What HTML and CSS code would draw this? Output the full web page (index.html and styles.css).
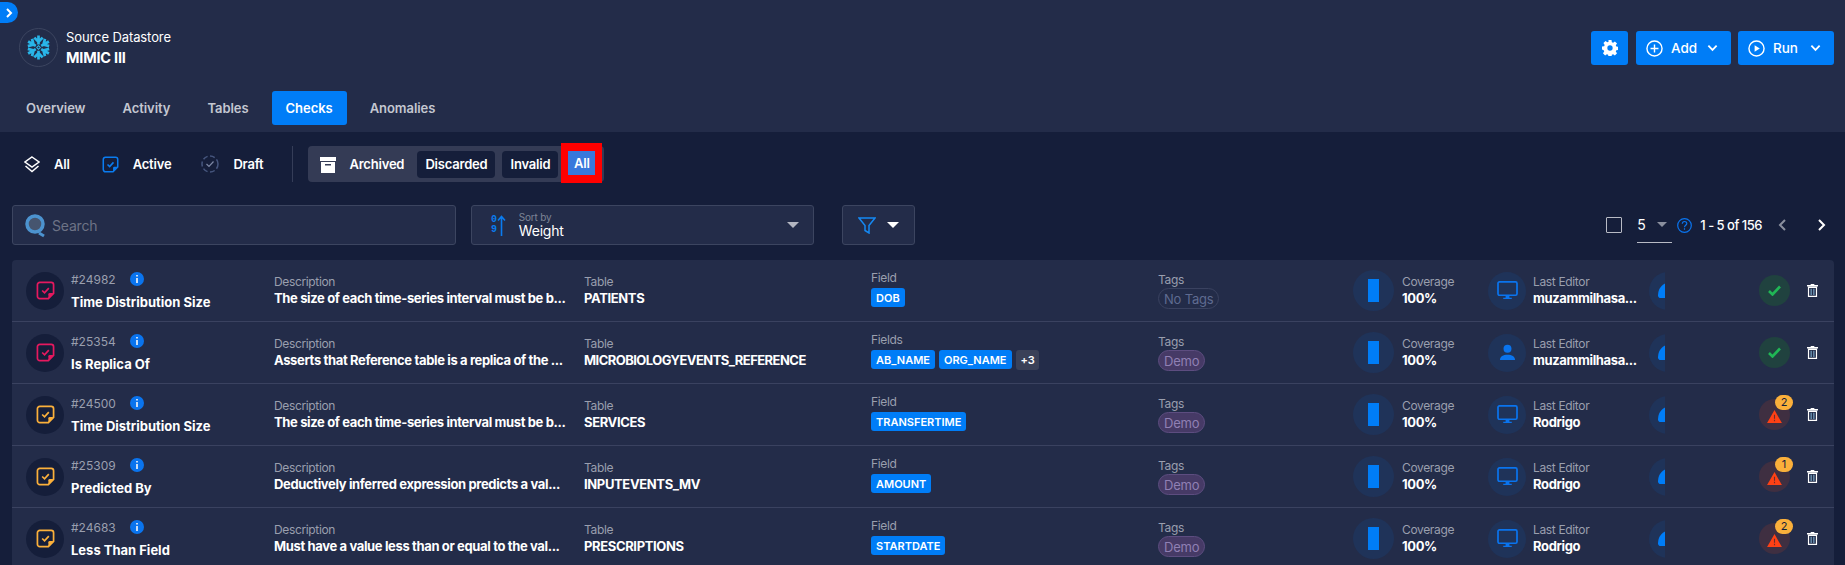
FILE: index.html
```html
<!DOCTYPE html>
<html lang="en">
<head>
    <meta charset="UTF-8">
    <meta name="viewport" content="width=device-width, initial-scale=1.0">
    <title>MIMIC III Checks</title>
    <link rel="stylesheet" href="styles.css">
</head>
<body>
    <svg class="defs" width="0" height="0">
        <symbol id="note" viewBox="0 0 20 20">
            <path d="M4 1.500h12a2.500 2.500 0 0 1 2.500 2.500v9l-5.500 5.500H4A2.500 2.500 0 0 1 1.500 16V4A2.500 2.500 0 0 1 4 1.500z" fill="none" stroke="currentColor" stroke-width="1.800"/>
            <path d="M18.500 12.500h-4a1.500 1.500 0 0 0-1.500 1.500v4.500z" fill="currentColor"/>
            <path d="M6.500 10l2.500 2.500 4.500-5" fill="none" stroke="currentColor" stroke-width="1.800"/>
        </symbol>
        <symbol id="monitor" viewBox="0 0 22 20">
            <path d="M2.500 1h17A1.500 1.500 0 0 1 21 2.500v11a1.500 1.500 0 0 1-1.500 1.500h-17A1.500 1.500 0 0 1 1 13.500v-11A1.500 1.500 0 0 1 2.500 1z" fill="none" stroke="currentColor" stroke-width="1.800"/>
            <path d="M9 15h4v2.500h2.500V19h-9v-1.500H9z" fill="currentColor"/>
        </symbol>
        <symbol id="person" viewBox="0 0 18 18">
            <circle cx="9" cy="5" r="4.200" fill="currentColor"/>
            <path d="M1 17c0-3.500 3.500-5.500 8-5.500s8 2 8 5.500z" fill="currentColor"/>
        </symbol>
        <symbol id="trash" viewBox="0 0 12 14">
            <path d="M4 0h4v1h4v1.500H0V1h4zM1 3h10v11H1zm1.300 1.300v8.400h7.400V4.300z" fill="#fff"/>
            <path d="M4 5h1v7H4zM7 5h1v7H7z" fill="#8fc6e8"/>
        </symbol>
        <symbol id="warn" viewBox="0 0 16 14">
            <path d="M8 0l8 14H0z" fill="#ff4115"/>
            <path d="M7.400 5h1.200v4.500H7.400zM7.400 10.500h1.200V12H7.400z" fill="#6d2c2c"/>
        </symbol>
        <symbol id="info" viewBox="0 0 14 14">
            <circle cx="7" cy="7" r="7" fill="#0a74ee"/>
            <path d="M6.100 3h1.800v1.600H6.100zM6.100 6h1.800v5H6.100z" fill="#dfe9f7"/>
        </symbol>
        <symbol id="chevron" viewBox="0 0 12 8">
            <path d="M1.500 1.500L6 6l4.500-4.500" fill="none" stroke="currentColor" stroke-width="2"/>
        </symbol>
        <g id="flake-arm">
            <path d="M12 9V.5M8 2.500L12 6.500 16 2.500"/>
        </g>
    </svg>

    <a class="side-toggle" href="#">
        <svg width="8" height="10" viewBox="0 0 8 10"><path d="M2 1l4 4-4 4" fill="none" stroke="#fff" stroke-width="2"/></svg>
    </a>

    <header class="header">
        <div class="top-bar">
            <div class="datastore">
                <div class="logo">
                    <svg width="25" height="25" viewBox="0 0 24 24" fill="none" stroke="#29b5e8" stroke-width="2.600">
                        <use href="#flake-arm"/>
                        <use href="#flake-arm" transform="rotate(60 12 12)"/>
                        <use href="#flake-arm" transform="rotate(120 12 12)"/>
                        <use href="#flake-arm" transform="rotate(180 12 12)"/>
                        <use href="#flake-arm" transform="rotate(240 12 12)"/>
                        <use href="#flake-arm" transform="rotate(300 12 12)"/>
                        <path d="M12 10.300L13.700 12 12 13.700 10.300 12z" stroke-width="1"/>
                    </svg>
                </div>
                <div>
                    <div class="datastore-type">Source Datastore</div>
                    <div class="datastore-name">MIMIC III</div>
                </div>
            </div>
            <div class="actions">
                <button class="action-btn gear-btn">
                    <svg width="16" height="16" viewBox="0 0 18 18"><path fill="#fff" fill-rule="evenodd" d="M7.300 0h3.400l.4 2.400 1.400.6 2-1.400 2.400 2.400-1.400 2 .6 1.400 2.400.4v3.400l-2.400.4-.6 1.400 1.400 2-2.400 2.400-2-1.400-1.400.6-.4 2.400H7.300l-.4-2.400-1.400-.6-2 1.400-2.400-2.400 1.400-2-.6-1.400L0 10.700V7.300l2.400-.4.600-1.400-1.400-2L4 1.100l2 1.400 1.400-.6zM9 6a3 3 0 1 0 0 6 3 3 0 0 0 0-6z"/></svg>
                </button>
                <button class="action-btn add-btn">
                    <svg width="17" height="17" viewBox="0 0 18 18" fill="none" stroke="#fff" stroke-width="1.500"><circle cx="9" cy="9" r="8"/><path d="M9 4.800v8.400M4.800 9h8.400"/></svg>
                    <span class="action-label">Add</span>
                    <svg class="action-caret" width="11" height="8"><use href="#chevron"/></svg>
                </button>
                <button class="action-btn run-btn">
                    <svg width="17" height="17" viewBox="0 0 18 18" fill="none" stroke="#fff" stroke-width="1.500"><circle cx="9" cy="9" r="8"/><path d="M7 5.500L12.500 9 7 12.500z" fill="#fff" stroke="none"/></svg>
                    <span class="action-label">Run</span>
                    <svg class="action-caret" width="11" height="8"><use href="#chevron"/></svg>
                </button>
            </div>
        </div>
        <nav class="tabs">
            <a class="tab" href="#">Overview</a>
            <a class="tab" href="#">Activity</a>
            <a class="tab" href="#">Tables</a>
            <a class="tab active" href="#">Checks</a>
            <a class="tab" href="#">Anomalies</a>
        </nav>
    </header>

    <main class="content">
        <div class="status-filter">
            <a class="status-item status-all" href="#">
                <svg width="16" height="17" viewBox="0 0 16 17" fill="none" stroke="#fff" stroke-width="1.500"><path d="M8 1l7 5-7 5-7-5z"/><path d="M1.500 10L8 15.500 14.500 10"/></svg>
                All
            </a>
            <a class="status-item status-active" href="#">
                <svg class="blue-icon" width="17" height="19"><use href="#note"/></svg>
                Active
            </a>
            <a class="status-item status-draft" href="#">
                <svg width="18" height="18" viewBox="0 0 18 18" fill="none"><circle cx="9" cy="9" r="8" stroke="#46567e" stroke-width="1.500" stroke-dasharray="5 2.500"/><path d="M5.500 9l2.500 2.500 4.500-5" stroke="#7d88a5" stroke-width="1.200"/></svg>
                Draft
            </a>
            <span class="filter-divider"></span>
            <div class="archive-group">
                <svg class="archive-icon" width="16" height="17" viewBox="0 0 16 17"><path d="M0 1h16v4H0z" fill="#fff"/><path fill="#fff" fill-rule="evenodd" d="M1 6h14v11H1zm4 2v1.500h6V8z"/></svg>
                <span class="archive-item archive-first">Archived</span>
                <span class="archive-item archive-dark discarded">Discarded</span>
                <span class="archive-item archive-dark invalid">Invalid</span>
                <span class="archive-all"><span>All</span></span>
            </div>
        </div>

        <div class="toolbar">
            <div class="search">
                <svg width="23" height="25" viewBox="0 0 23 25" fill="none"><circle cx="11" cy="11" r="8" fill="#46556f" stroke="#4c93cf" stroke-width="3.500"/><path d="M15 20l5 3" stroke="#4c93cf" stroke-width="3"/></svg>
                <span>Search</span>
            </div>
            <div class="sort">
                <span class="sort-digits">0<br>9</span>
                <svg width="9" height="21" viewBox="0 0 9 21" fill="none" stroke="#0a7cf0" stroke-width="1.600"><path d="M4.500 21V2M1 5.500L4.500 1.500 8 5.500"/></svg>
                <div class="sort-text">
                    <div class="sort-label">Sort by</div>
                    <div class="sort-value">Weight</div>
                </div>
                <span class="caret"></span>
            </div>
            <div class="filter-btn">
                <svg width="18" height="17" viewBox="0 0 18 17" fill="none" stroke="#1588f2" stroke-width="1.500"><path d="M1 1h16l-6 7.500V16l-4-2.500v-5z"/></svg>
                <span class="caret caret-white"></span>
            </div>
            <div class="pager">
                <span class="checkbox"></span>
                <div class="page-size"><span>5</span><span class="caret caret-grey"></span></div>
                <svg class="pager-help" width="15" height="15" viewBox="0 0 15 15" fill="none" stroke="#0a74ee" stroke-width="1.200"><circle cx="7.500" cy="7.500" r="6.800"/><path d="M5.300 5.800c0-3 4.500-3 4.500-.2 0 1.800-2.300 1.700-2.300 3.700M7.500 10.300v1.400"/></svg>
                <span class="page-range">1 - 5 of 156</span>
                <svg class="page-prev" width="9" height="12" viewBox="0 0 9 12"><path d="M7 1L2 6l5 5" fill="none" stroke="#8a8f9e" stroke-width="2"/></svg>
                <svg class="page-next" width="9" height="12" viewBox="0 0 9 12"><path d="M2 1l5 5-5 5" fill="none" stroke="#fff" stroke-width="2"/></svg>
            </div>
        </div>

        <div class="check-list">
            <div class="check-row">
                <div class="check-main">
                    <span class="type-icon pink"><svg width="19" height="19"><use href="#note"/></svg></span>
                    <div>
                        <div class="check-id">#24982 <svg class="info-icon" width="14" height="14"><use href="#info"/></svg></div>
                        <div class="check-name">Time Distribution Size</div>
                    </div>
                </div>
                <div class="cell"><div class="cell-label">Description</div><div class="cell-value">The size of each time-series interval must be b...</div></div>
                <div class="cell"><div class="cell-label">Table</div><div class="cell-value">PATIENTS</div></div>
                <div class="cell"><div class="cell-label">Field</div><div class="chips"><span class="chip">DOB</span></div></div>
                <div class="cell"><div class="cell-label">Tags</div><span class="tag no-tags">No Tags</span></div>
                <div class="metric">
                    <span class="metric-circle"><span class="coverage-bar"></span></span>
                    <div><div class="cell-label">Coverage</div><div class="cell-value">100%</div></div>
                </div>
                <div class="metric">
                    <span class="editor-circle"><svg width="21" height="19"><use href="#monitor"/></svg></span>
                    <div><div class="cell-label">Last Editor</div><div class="cell-value">muzammilhasa...</div></div>
                </div>
                <div class="clip-cell"><span class="clip-circle"></span></div>
                <span class="state state-ok"><svg width="13" height="11" viewBox="0 0 13 11"><path d="M1 6l3.500 3.500L12 1.500" fill="none" stroke="#20b755" stroke-width="2.600"/></svg></span>
                <svg class="trash-icon" width="11" height="13"><use href="#trash"/></svg>
            </div>

            <div class="check-row">
                <div class="check-main">
                    <span class="type-icon pink"><svg width="19" height="19"><use href="#note"/></svg></span>
                    <div>
                        <div class="check-id">#25354 <svg class="info-icon" width="14" height="14"><use href="#info"/></svg></div>
                        <div class="check-name">Is Replica Of</div>
                    </div>
                </div>
                <div class="cell"><div class="cell-label">Description</div><div class="cell-value">Asserts that Reference table is a replica of the ...</div></div>
                <div class="cell"><div class="cell-label">Table</div><div class="cell-value long-name">MICROBIOLOGYEVENTS_REFERENCE</div></div>
                <div class="cell"><div class="cell-label">Fields</div><div class="chips"><span class="chip">AB_NAME</span><span class="chip">ORG_NAME</span><span class="chip-more">+3</span></div></div>
                <div class="cell"><div class="cell-label">Tags</div><span class="tag">Demo</span></div>
                <div class="metric">
                    <span class="metric-circle"><span class="coverage-bar"></span></span>
                    <div><div class="cell-label">Coverage</div><div class="cell-value">100%</div></div>
                </div>
                <div class="metric">
                    <span class="editor-circle"><svg width="17" height="17"><use href="#person"/></svg></span>
                    <div><div class="cell-label">Last Editor</div><div class="cell-value">muzammilhasa...</div></div>
                </div>
                <div class="clip-cell"><span class="clip-circle"></span></div>
                <span class="state state-ok"><svg width="13" height="11" viewBox="0 0 13 11"><path d="M1 6l3.500 3.500L12 1.500" fill="none" stroke="#20b755" stroke-width="2.600"/></svg></span>
                <svg class="trash-icon" width="11" height="13"><use href="#trash"/></svg>
            </div>

            <div class="check-row">
                <div class="check-main">
                    <span class="type-icon amber"><svg width="19" height="19"><use href="#note"/></svg></span>
                    <div>
                        <div class="check-id">#24500 <svg class="info-icon" width="14" height="14"><use href="#info"/></svg></div>
                        <div class="check-name">Time Distribution Size</div>
                    </div>
                </div>
                <div class="cell"><div class="cell-label">Description</div><div class="cell-value">The size of each time-series interval must be b...</div></div>
                <div class="cell"><div class="cell-label">Table</div><div class="cell-value">SERVICES</div></div>
                <div class="cell"><div class="cell-label">Field</div><div class="chips"><span class="chip">TRANSFERTIME</span></div></div>
                <div class="cell"><div class="cell-label">Tags</div><span class="tag">Demo</span></div>
                <div class="metric">
                    <span class="metric-circle"><span class="coverage-bar"></span></span>
                    <div><div class="cell-label">Coverage</div><div class="cell-value">100%</div></div>
                </div>
                <div class="metric">
                    <span class="editor-circle"><svg width="21" height="19"><use href="#monitor"/></svg></span>
                    <div><div class="cell-label">Last Editor</div><div class="cell-value">Rodrigo</div></div>
                </div>
                <div class="clip-cell"><span class="clip-circle"></span></div>
                <span class="state state-warn"><svg width="15" height="13"><use href="#warn"/></svg><span class="count">2</span></span>
                <svg class="trash-icon" width="11" height="13"><use href="#trash"/></svg>
            </div>

            <div class="check-row">
                <div class="check-main">
                    <span class="type-icon amber"><svg width="19" height="19"><use href="#note"/></svg></span>
                    <div>
                        <div class="check-id">#25309 <svg class="info-icon" width="14" height="14"><use href="#info"/></svg></div>
                        <div class="check-name">Predicted By</div>
                    </div>
                </div>
                <div class="cell"><div class="cell-label">Description</div><div class="cell-value">Deductively inferred expression predicts a val...</div></div>
                <div class="cell"><div class="cell-label">Table</div><div class="cell-value">INPUTEVENTS_MV</div></div>
                <div class="cell"><div class="cell-label">Field</div><div class="chips"><span class="chip">AMOUNT</span></div></div>
                <div class="cell"><div class="cell-label">Tags</div><span class="tag">Demo</span></div>
                <div class="metric">
                    <span class="metric-circle"><span class="coverage-bar"></span></span>
                    <div><div class="cell-label">Coverage</div><div class="cell-value">100%</div></div>
                </div>
                <div class="metric">
                    <span class="editor-circle"><svg width="21" height="19"><use href="#monitor"/></svg></span>
                    <div><div class="cell-label">Last Editor</div><div class="cell-value">Rodrigo</div></div>
                </div>
                <div class="clip-cell"><span class="clip-circle"></span></div>
                <span class="state state-warn"><svg width="15" height="13"><use href="#warn"/></svg><span class="count">1</span></span>
                <svg class="trash-icon" width="11" height="13"><use href="#trash"/></svg>
            </div>

            <div class="check-row">
                <div class="check-main">
                    <span class="type-icon amber"><svg width="19" height="19"><use href="#note"/></svg></span>
                    <div>
                        <div class="check-id">#24683 <svg class="info-icon" width="14" height="14"><use href="#info"/></svg></div>
                        <div class="check-name">Less Than Field</div>
                    </div>
                </div>
                <div class="cell"><div class="cell-label">Description</div><div class="cell-value">Must have a value less than or equal to the val...</div></div>
                <div class="cell"><div class="cell-label">Table</div><div class="cell-value">PRESCRIPTIONS</div></div>
                <div class="cell"><div class="cell-label">Field</div><div class="chips"><span class="chip">STARTDATE</span></div></div>
                <div class="cell"><div class="cell-label">Tags</div><span class="tag">Demo</span></div>
                <div class="metric">
                    <span class="metric-circle"><span class="coverage-bar"></span></span>
                    <div><div class="cell-label">Coverage</div><div class="cell-value">100%</div></div>
                </div>
                <div class="metric">
                    <span class="editor-circle"><svg width="21" height="19"><use href="#monitor"/></svg></span>
                    <div><div class="cell-label">Last Editor</div><div class="cell-value">Rodrigo</div></div>
                </div>
                <div class="clip-cell"><span class="clip-circle"></span></div>
                <span class="state state-warn"><svg width="15" height="13"><use href="#warn"/></svg><span class="count">2</span></span>
                <svg class="trash-icon" width="11" height="13"><use href="#trash"/></svg>
            </div>
        </div>
    </main>
</body>
</html>
```

FILE: styles.css
```css
/* --- Page --- */
html, body {
    height: 100%;
}
body {
    font-family: Inter, "Noto Sans", sans-serif;
    margin: 0;
    background-color: #151e3a;
    color: #fff;
    overflow: hidden;
    letter-spacing: -0.2px;
}
a {
    color: inherit;
    text-decoration: none;
}
.defs {
    position: absolute;
}
.side-toggle {
    position: absolute;
    top: 2px;
    left: 0;
    width: 18px;
    height: 21px;
    background-color: #007df7;
    border-radius: 0 11px 11px 0;
    display: flex;
    align-items: center;
    justify-content: center;
}

/* --- Header --- */
.header {
    height: 132px;
    box-sizing: border-box;
    background-color: #232c49;
    padding-top: 28px;
}
.top-bar {
    display: flex;
    justify-content: space-between;
    padding: 3px 11px 0 19px;
    height: 36px;
}
.datastore {
    display: flex;
    align-items: center;
    gap: 8px;
    height: 39px;
    margin-top: -3px;
}
.logo {
    width: 39px;
    height: 39px;
    box-sizing: border-box;
    border: 1px solid #3c4560;
    border-radius: 50%;
    display: flex;
    align-items: center;
    justify-content: center;
}
.datastore-type {
    font-size: 13px;
    font-weight: 400;
    line-height: 18px;
    letter-spacing: -0.1px;
}
.datastore-name {
    font-size: 14.500px;
    font-weight: 700;
    line-height: 20px;
    margin-top: 2px;
}
.actions {
    display: flex;
    gap: 7px;
}
.action-btn {
    height: 34px;
    padding: 0 13px 0 10px;
    display: flex;
    align-items: center;
    background-color: #007df7;
    border: none;
    border-radius: 3px;
    color: #fff;
    font-family: inherit;
    font-size: 13.500px;
    font-weight: 500;
}
.gear-btn {
    width: 37px;
    justify-content: center;
    padding: 0;
    margin-right: 1px;
}
.add-btn {
    width: 95px;
}
.run-btn {
    width: 96px;
}
.action-label {
    margin-left: 8px;
}
.action-caret {
    margin-left: auto;
    color: #fff;
}
.tabs {
    display: flex;
    gap: 9px;
    padding-left: 12px;
    margin-top: 24px;
}
.tab {
    height: 34px;
    padding: 0 14px;
    display: flex;
    align-items: center;
    font-size: 13px;
    font-weight: 600;
    letter-spacing: -0.05px;
    color: #c4c7d1;
    border-radius: 3px;
}
.tab.active {
    background-color: #007df7;
    color: #fff;
}

/* --- Status filter --- */
.content {
    padding: 0 11px 0 12px;
}
.status-filter {
    display: flex;
    align-items: center;
    height: 38px;
    margin-top: 13px;
    font-size: 13px;
    font-weight: 600;
}
.status-item {
    display: flex;
    align-items: center;
    gap: 14px;
}
.status-all {
    margin-left: 12px;
}
.status-active {
    margin-left: 32px;
}
.status-draft {
    margin-left: 30px;
}
.blue-icon {
    color: #0a7cf0;
}
.filter-divider {
    width: 1px;
    height: 36px;
    background-color: #353d58;
    margin-left: 29px;
}
.archive-group {
    display: flex;
    align-items: center;
    height: 36px;
    margin-left: 15px;
    padding-left: 12px;
    width: 296px;
    box-sizing: border-box;
    background-color: #343b55;
    border-radius: 4px;
    position: relative;
}
.archive-first {
    margin-left: 13px;
    width: 68px;
}
.archive-dark {
    background-color: #151e3a;
    height: 27px;
    display: flex;
    align-items: center;
    justify-content: center;
    border-radius: 4px;
}
.discarded {
    width: 78px;
}
.invalid {
    width: 56px;
    margin-left: 7px;
}
.archive-all {
    position: absolute;
    right: 2px;
    top: -3px;
    width: 41px;
    height: 40px;
    box-sizing: border-box;
    border: 7px solid #f00;
    border-width: 8px 7px;
    display: flex;
    align-items: center;
    justify-content: center;
    background-color: #3878dc;
}

/* --- Toolbar --- */
.toolbar {
    display: flex;
    align-items: center;
    height: 40px;
    margin-top: 22px;
}
.search, .sort, .filter-btn {
    height: 40px;
    box-sizing: border-box;
    background-color: #232c49;
    border: 1px solid #3c4560;
    border-radius: 3px;
    display: flex;
    align-items: center;
}
.search {
    width: 444px;
    padding-left: 11px;
    gap: 5px;
    font-size: 14px;
    color: #6d7386;
}
.sort {
    width: 343px;
    margin-left: 15px;
    padding: 0 14px 0 19px;
}
.sort-digits {
    font-family: "Liberation Mono", monospace;
    font-size: 10px;
    font-weight: 700;
    line-height: 10px;
    color: #0a7cf0;
}
.sort-text {
    margin-left: 13px;
    flex: 1;
}
.sort-label {
    font-size: 10px;
    line-height: 11px;
    color: #7d8496;
}
.sort-value {
    font-size: 14px;
    line-height: 16px;
}
.caret {
    width: 0;
    height: 0;
    border-left: 6px solid transparent;
    border-right: 6px solid transparent;
    border-top: 6px solid #b3b6c1;
}
.caret-white {
    border-top-color: #fff;
}
.caret-grey {
    border-left-width: 5px;
    border-right-width: 5px;
    border-top: 5px solid #8a8f9e;
    margin-left: 11px;
}
.filter-btn {
    width: 73px;
    margin-left: 28px;
    padding-left: 15px;
    gap: 11px;
}
.pager {
    margin-left: auto;
    display: flex;
    align-items: center;
    font-size: 13px;
}
.checkbox {
    width: 14px;
    height: 14px;
    border: 1px solid #b8bbc5;
    border-radius: 1px;
}
.page-size {
    width: 35px;
    height: 34px;
    margin-left: 15px;
    display: flex;
    align-items: center;
    border-bottom: 1px solid #b8bbc5;
    font-size: 14px;
}
.pager-help {
    margin-left: 5px;
}
.page-range {
    margin-left: 8px;
    font-weight: 500;
    letter-spacing: -0.5px;
}
.page-prev {
    margin-left: 16px;
}
.page-next {
    margin-left: 30px;
    margin-right: 8px;
}

/* --- Check rows --- */
.check-list {
    margin-top: 15px;
    background-color: #232c49;
    border-radius: 4px 4px 0 0;
}
.check-row {
    display: grid;
    grid-template-columns: 248px 310px 287px 287px 195px 135px 161px 110px 48px 1fr;
    align-items: center;
    height: 62px;
    box-sizing: border-box;
    padding-left: 14px;
    border-bottom: 1px solid #3a4260;
}
.check-main {
    display: flex;
    align-items: center;
    gap: 7px;
}
.type-icon {
    width: 38px;
    height: 38px;
    border-radius: 50%;
    background-color: #151e3a;
    display: flex;
    align-items: center;
    justify-content: center;
}
.type-icon.pink {
    color: #e6195f;
}
.type-icon.amber {
    color: #fbb03b;
}
.check-id {
    display: flex;
    align-items: center;
    gap: 14px;
    font-size: 12px;
    line-height: 17px;
    color: #9a9fae;
    letter-spacing: 0;
}
.check-name {
    font-size: 13px;
    font-weight: 700;
    line-height: 17px;
    margin-top: 6px;
    letter-spacing: 0;
}
.cell-label {
    font-size: 12px;
    line-height: 16px;
    color: #9a9fae;
    letter-spacing: -0.35px;
}
.cell-value {
    font-size: 13px;
    font-weight: 700;
    line-height: 17px;
    white-space: nowrap;
    letter-spacing: -0.36px;
}
.long-name {
    letter-spacing: -0.55px;
}
.chips {
    display: flex;
    align-items: center;
    gap: 4px;
    margin: 2px 0 4px;
}
.chip {
    height: 19px;
    padding: 0 5px;
    display: flex;
    align-items: center;
    background-color: #007df7;
    border-radius: 3px;
    font-size: 11px;
    font-weight: 600;
    letter-spacing: 0;
}
.chip-more {
    height: 20px;
    padding: 0 5px;
    display: flex;
    align-items: center;
    background-color: #3a4158;
    border-radius: 3px;
    font-size: 11px;
    font-weight: 600;
}
.tag {
    display: flex;
    width: fit-content;
    align-items: center;
    height: 21px;
    box-sizing: border-box;
    padding: 0 5px;
    background-color: #463a66;
    border: 1px solid #5d4d80;
    border-radius: 11px;
    font-size: 13px;
    color: #9080b4;
}
.tag.no-tags {
    background-color: transparent;
    border-color: #3a4260;
    color: #5f6b90;
}
.metric {
    display: flex;
    align-items: center;
    gap: 8px;
}
.metric-circle {
    width: 41px;
    height: 41px;
    border-radius: 50%;
    background-color: #1f3359;
    display: flex;
    align-items: center;
    justify-content: center;
}
.coverage-bar {
    width: 11px;
    height: 23px;
    background-color: #007df7;
}
.editor-circle {
    width: 38px;
    height: 38px;
    border-radius: 50%;
    background-color: #1f3359;
    color: #0a74ee;
    display: flex;
    align-items: center;
    justify-content: center;
    margin-right: -1px;
}
.clip-cell {
    width: 16px;
    height: 38px;
    overflow: hidden;
}
.clip-circle {
    display: block;
    position: relative;
    width: 38px;
    height: 38px;
    border-radius: 50%;
    background-color: #1f3359;
}
.clip-circle::after {
    content: "";
    position: absolute;
    left: 9px;
    top: 10px;
    width: 14px;
    height: 16px;
    background-color: #007df7;
    border-radius: 14px 0 0 3px;
}
.state {
    position: relative;
    width: 31px;
    height: 31px;
    border-radius: 50%;
    display: flex;
    align-items: center;
    justify-content: center;
}
.state-ok {
    background-color: #20423f;
}
.state-warn {
    background-color: #3f2f41;
    padding-top: 3px;
    box-sizing: border-box;
}
.count {
    position: absolute;
    top: -4px;
    right: -3px;
    width: 18px;
    height: 15px;
    border-radius: 8px;
    background-color: #fbb03b;
    color: #151e3a;
    font-size: 11px;
    line-height: 15px;
    text-align: center;
}
.trash-icon {
    display: block;
}
```
